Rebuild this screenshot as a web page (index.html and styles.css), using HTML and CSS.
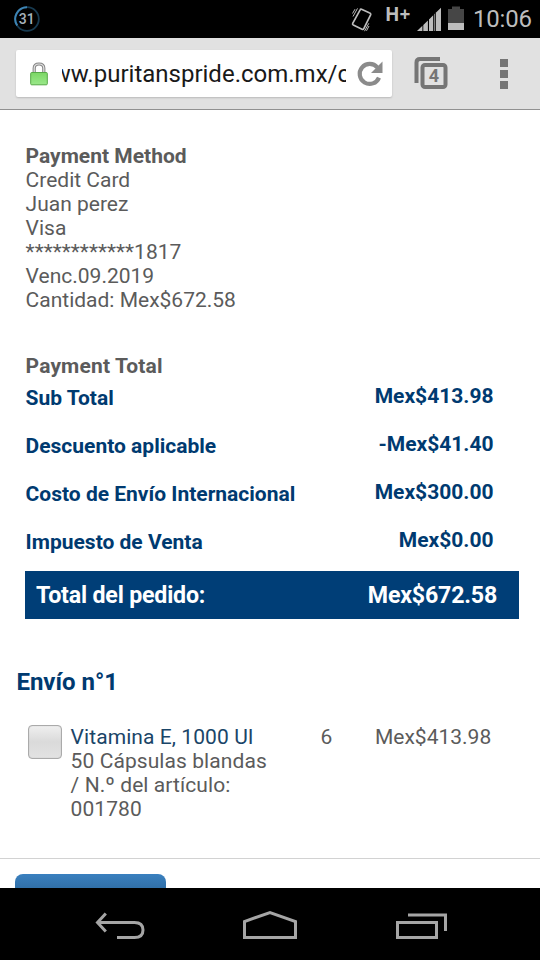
FILE: index.html
```html
<!DOCTYPE html>
<html lang="es">
<head>
<meta charset="utf-8">
<title>Puritan's Pride</title>
<link rel="stylesheet" href="styles.css">
</head>
<body>
<div class="phone">
  <header class="status">
    <svg class="ring" width="28" height="28" viewBox="0 0 28 28" fill="none">
      <circle cx="14" cy="14" r="11.8" stroke="#173a50" stroke-width="1.8"/>
      <path d="M4.2 20.5A11.8 11.8 0 0 1 14 2.2" stroke="#3d84b4" stroke-width="2"/>
      <text x="13.8" y="19" text-anchor="middle" class="ring-text">31</text>
    </svg>
    <svg class="vibrate" width="22" height="28" viewBox="0 0 22 28" fill="none" stroke="#bdbdbd">
      <path d="M10.5 3.3 18.2 6.8Q20.2 7.5 19.6 8.800L12.800 22.600Q12.200 23.800 11 23.300L2.300 18.900Q1.200 18.300 1.700 17.300L9 4.100Q9.500 2.900 10.500 3.300Z" stroke-width="1.700"/>
      <path d="M6.500 2.400 2 10.500M4 3.200 1.500 7.500M17.800 17.300 13.500 25.200M15.500 24.800 18 20" stroke-width="1"/>
    </svg>
    <span class="network">H+</span>
    <svg class="signal" width="25" height="25" viewBox="0 0 25 25" fill="#bdbdbd">
      <path d="M0 24 5.400 18.800V24ZM6.300 18 10.900 13.500V24H6.300ZM12 12.400 16.200 8.300V24H12ZM17.200 7.300 24 .7V24H17.200Z"/>
      <path d="M18.300 6V24" stroke="#000"/>
    </svg>
    <svg class="battery" width="16" height="25" viewBox="0 0 16 25">
      <path d="M4 .5H12V3H16V17H0V3H4Z" fill="#464646"/>
      <path d="M0 17H16V24H0Z" fill="#bdbdbd"/>
    </svg>
    <span class="clock">10:06</span>
  </header>

  <nav class="toolbar">
    <div class="omnibox">
      <svg class="lock" width="18" height="24" viewBox="0 0 18 24">
        <defs><linearGradient id="lockFill" x1="0" y1="0" x2="0" y2="1"><stop offset="0" stop-color="#7bd765"/><stop offset="1" stop-color="#9ae88a"/></linearGradient></defs>
        <path d="M4.200 12V6.300Q4.200 2 9 2T13.800 6.300V12" fill="none" stroke="#868686" stroke-width="3.200"/>
        <path d="M4.200 12V6.300Q4.200 2 9 2T13.800 6.300V12" fill="none" stroke="#e2e2e2" stroke-width="1.200"/>
        <rect x=".7" y="10.500" width="16.600" height="12.300" rx="1" fill="url(#lockFill)" stroke="#56a847"/>
      </svg>
      <div class="address"><span class="url">www.puritanspride.com.mx/c</span></div>
      <svg class="reload" width="28" height="28" viewBox="0 0 28 28">
        <path d="M21.400 7.500A10 10 0 1 0 23 17.600" fill="none" stroke="#8b8b8b" stroke-width="4.200"/>
        <path d="M26.500 1.500V13H15Z" fill="#8b8b8b"/>
      </svg>
    </div>
    <svg class="tabs" width="34" height="34" viewBox="0 0 34 34" fill="none" stroke="#757575">
      <path d="M2.500 27V6.500Q2.500 3 6 3H26" stroke-width="4"/>
      <rect x="8.500" y="9" width="23" height="22" rx="2.500" stroke-width="4"/>
      <text x="20" y="26.200" text-anchor="middle" class="tab-count">4</text>
    </svg>
    <div class="menu"><i></i><i></i><i></i></div>
  </nav>

  <main class="page">
    <section class="method">
      <h2>Payment Method</h2>
      <p>Credit Card</p>
      <p>Juan perez</p>
      <p>Visa</p>
      <p>************1817</p>
      <p>Venc.09.2019</p>
      <p>Cantidad: Mex$672.58</p>
    </section>
    <section class="totals">
      <h2>Payment Total</h2>
      <div class="row"><span>Sub Total</span><b>Mex$413.98</b></div>
      <div class="row"><span>Descuento aplicable</span><b>-Mex$41.40</b></div>
      <div class="row"><span>Costo de Envío Internacional</span><b>Mex$300.00</b></div>
      <div class="row"><span>Impuesto de Venta</span><b>Mex$0.00</b></div>
      <div class="grand"><span>Total del pedido:</span><span>Mex$672.58</span></div>
    </section>
    <section class="shipment">
      <h3>Envío n°1</h3>
      <div class="item">
        <span class="check"></span>
        <p class="name"><a>Vitamina E, 1000 UI</a><br>50 Cápsulas blandas<br>/ N.º del artículo:<br>001780</p>
        <span class="qty">6</span>
        <span class="price">Mex$413.98</span>
      </div>
    </section>
    <div class="actions"><div class="button"></div></div>
  </main>

  <footer class="navbar">
    <svg width="540" height="72" viewBox="0 0 540 72" fill="none" stroke="#a5a5a5" stroke-width="3">
      <path d="M98 34.500H134.500Q143 34.500 143 42T134.500 49.500H117"/>
      <path d="M105.800 25.500 97.500 34.500 105.800 43.500"/>
      <path d="M244.500 49.500V33.500L270 24.500 295.500 33.500V49.500Z"/>
      <path d="M397.500 34.500H436.500V49.500H397.500ZM408 27H445.500V43"/>
    </svg>
  </footer>
</div>
</body>
</html>
```
FILE: styles.css
```css
* { box-sizing: border-box; margin: 0; padding: 0; }
body { background: #000; font-family: Roboto, sans-serif; }
.phone { width: 540px; height: 960px; display: flex; flex-direction: column; overflow: hidden; }

.status { height: 38px; flex: none; display: flex; align-items: flex-start; background: #000; color: #bdbdbd; padding: 5px 0 0 13px; }
.status > * { flex: none; }
.ring-text { font: 500 14px Roboto, sans-serif; fill: #a6b3bc; }
.vibrate { margin: 1px 0 0 310px; }
.network { font: 700 19px/18px "Open Sans", sans-serif; margin-left: 12px; width: 25px; white-space: nowrap; }
.signal { margin: 2px 0 0 7px; }
.battery { margin: 1px 0 0 6px; }
.clock { font-size: 24px; line-height: 29px; margin-left: 9px; white-space: nowrap; letter-spacing: -0.2px; }

.toolbar { height: 72px; flex: none; display: flex; align-items: flex-start; background: #e1e1e1; border-bottom: 1px solid #919191; padding: 12px 0 0 16px; }
.omnibox { width: 376px; height: 47px; display: flex; align-items: center; background: #fff; border-radius: 2px; box-shadow: 0 1px 2px rgba(0,0,0,.18); padding-left: 14px; }
.address { width: 284px; height: 40px; margin-left: 14px; overflow: hidden; display: flex; justify-content: flex-end; }
.url { font-size: 24px; line-height: 41px; color: #191919; white-space: nowrap; margin-right: -4px; }
.reload { margin-left: 10px; }
.tabs { margin: 6px 0 0 22px; }
.tab-count { font: 700 18px Roboto, sans-serif; fill: #757575; stroke: none; }
.menu { margin: 9px 0 0 52px; display: grid; gap: 3px; }
.menu i { width: 8px; height: 8px; background: #757575; }

.page { flex: 1; min-height: 0; overflow: hidden; background: #fff; padding-top: 34px; font-size: 21px; line-height: 24px; color: #5b5b5b; }
.page h2 { font-size: 21px; font-weight: 700; }
.method { padding-left: 25.600px; }
.totals { margin-top: 42px; }
.totals h2 { padding-left: 25.600px; letter-spacing: 0.150px; }
.row { display: flex; justify-content: space-between; align-items: flex-start; height: 48px; padding: 6px 46.500px 0 25.600px; color: #003a70; font-weight: 700; }
.row span { padding-top: 2px; }
.row b { font-weight: 700; }
.grand { display: flex; justify-content: space-between; height: 48px; margin: 1px 21px 0 25px; padding: 0 22px 0 11px; background: #003e77; color: #fff; font-size: 23.200px; line-height: 48px; font-weight: 700; letter-spacing: -0.200px; }
.shipment { margin-top: 49px; }
.shipment h3 { padding-left: 16.400px; font-size: 24px; line-height: 28px; color: #003a70; }
.item { display: flex; margin-top: 29px; padding-left: 28px; }
.check { width: 34px; height: 34px; border: 1.500px solid #aaa; border-radius: 4px; background: linear-gradient(#efefef, #dadada 50%, #e2e2e2); box-shadow: inset 0 0 1px #aaa; }
.name { width: 250px; margin-left: 8.600px; white-space: nowrap; letter-spacing: 0.080px; }
.name a { color: #1a4568; }
.qty { width: 54.400px; }
.actions { margin-top: 37px; border-top: 1px solid #d2d2d2; padding: 15px 15px 0; }
.button { width: 151px; height: 50px; border-radius: 8px; background: linear-gradient(#3a80bf, #286092 28px); }

.navbar { height: 72px; flex: none; background: #000; }
.navbar svg { display: block; }
```
